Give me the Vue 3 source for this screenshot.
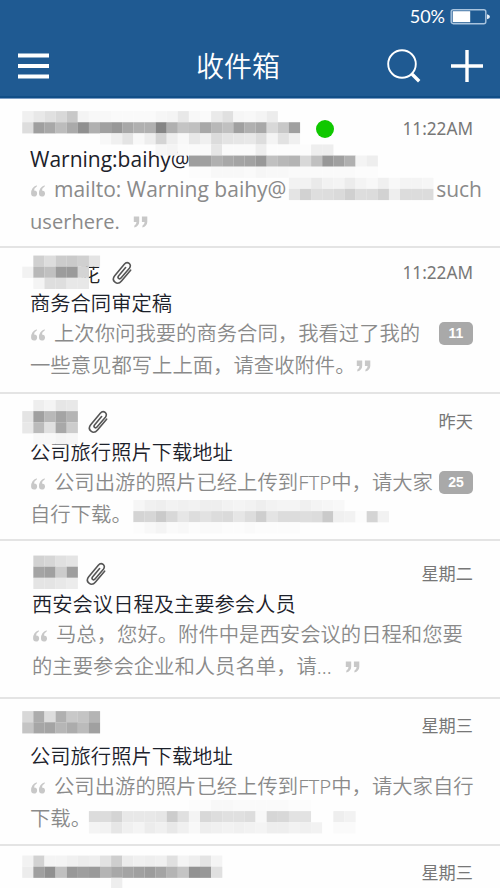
<script setup>
const mails = [
  {
    top: 99,
    online: true,
    senderGap: 316 - 30,
    time: '11:22AM',
    subject: 'Warning:baihy@',
    latin: true,
    lines: [
      { text: 'mailto: Warning baihy@', open: true, tail: 'such' },
      { text: 'userhere.', close: true, spaced: true },
    ],
    mosaic: [
      [10, 2, 'f0e8e0d8c8f4f8f8fafafafaf6f4e8f8faeae0f6f8f4ec'],
      [11, 2, 'dd9fa8bcaa90b0a098a8b0b085b0c4c0a8b8c0a0b0a8d8c8a0'],
      [12, 9, 'f8f0e4f8eed4eef8e8f0dce4e6e8ddf4e2f0'],
      [13, 14, 'f6f4fafafae6fafafaeefcfcfcfceeee'],
      [14, 17, '9ea0b0a8a4a298c0b8b4d8c098a0b0f4ee'],
      [15, 17, 'fcfcf8f8f8faf6f8f8fafafafafafafcfc'],
      [16, 26, 'f2f2eaf2f4ecf4f8f0f8f4f4f6'],
      [17, 26, 'e4d2dedddad0dddcd2eedcdcdc'],
    ],
  },
  {
    top: 248,
    name: '花',
    clip: true,
    senderGap: 50,
    time: '11:22AM',
    badge: '11',
    subject: '商务合同审定稿',
    lines: [
      { text: '上次你问我要的商务合同，我看过了我的', open: true },
      { text: '一些意见都写上上面，请查收附件。', close: true },
    ],
    mosaic: [
      [23, 3, 'd0ddcccad0e4'],
      [24, 2, 'f2b8c09c9ad4'],
      [25, 3, 'f4dedee8e8'],
    ],
  },
  {
    top: 394,
    clip: true,
    senderGap: 54,
    time: '昨天',
    badge: '25',
    subject: '公司旅行照片下载地址',
    lines: [
      { text: '公司出游的照片已经上传到FTP中，请大家', open: true },
      { text: '自行下载。' },
    ],
    mosaic: [
      [36, 3, 'eef4e6e8'],
      [37, 2, 'e4a0b8a4b4'],
      [38, 2, 'e8bbe0a8cc'],
      [39, 3, 'f8f8f4f6'],
      [45, 12, 'f6f0eef2f0f2eeeef2f4f2eef2f4f4f0f4f6f8'],
      [46, 12, 'd4d6cad8e6dde2dcdae6ddcee4dcdcdedccaf0f2fcd4f2'],
      [47, 12, 'fcf8f4faf8fcfafafcfcfafcfcfcfc'],
    ],
  },
  {
    top: 541,
    clip: true,
    senderGap: 50,
    time: '星期二',
    subject: '西安会议日程及主要参会人员',
    lines: [
      { text: '马总，您好。附件中是西安会议的日程和您要', open: true },
      { text: '的主要参会企业和人员名单，请...', close: true, spaced: true },
    ],
    mosaic: [
      [50, 3, 'd2d6e0e4'],
      [51, 3, 'a4a0cc9e'],
      [52, 3, 'e4e4e8ec'],
    ],
  },
  {
    top: 699,
    senderGap: 70,
    time: '星期三',
    subject: '公司旅行照片下载地址',
    lines: [
      { text: '公司出游的照片已经上传到FTP中，请大家自行', open: true },
      { text: '下载。' },
    ],
    mosaic: [
      [64, 2, 'd8acddb0c8c4b4'],
      [65, 2, 'c4a6a4b6acbba0'],
      [72, 17, 'fcfcf8f8fafafafafafcfc'],
      [73, 8, 'dcdcd4e8e8e8e6cce0f4d8dde0e0ddf8d6d8e2e2fefeeef2'],
      [74, 8, 'f4f2e6f0f4ecf0e8f0f8eef0f2f0f2f4eeeef2f0f2fefafa'],
    ],
  },
  {
    top: 846,
    senderGap: 170,
    time: '星期三',
    lines: [],
    mosaic: [
      [77, 2, 'f2d2f4f4f0eceee2ceecf0eef0e0f4eee4f4'],
      [78, 2, 'eca090c0989e9ab4a8a4a09ca4b4c49298e0'],
      [79, 10, 'ee'],
    ],
  },
]

const CELL = 100 / 9

function cells(mail) {
  return mail.mosaic.flatMap(([row, col, shades]) =>
    shades.match(/../g).map((s, i) => ({
      x: (col + i) * CELL,
      y: row * CELL - mail.top,
      fill: `#${s}${s}${s}`,
    }))
  )
}
</script>

<template>
  <div class="screen">
    <header class="header">
      <div class="status">
        <span>50%</span>
        <svg class="battery" width="41" height="18" viewBox="0 0 41 18">
          <rect x="1.2" y="1.7" width="34.6" height="14" rx="2" fill="none" stroke="#a9c4de" stroke-width="1.4" />
          <rect x="2.7" y="3.2" width="17.5" height="11" fill="#fff" />
          <path d="M37 6.2q3 .6 3 2.5t-3 2.5z" fill="#e4edf6" />
        </svg>
      </div>
      <div class="bar">
        <svg class="menu" width="31" height="27" viewBox="0 0 31 27">
          <path d="M0 2.5h31M0 13h31M0 23.5h31" stroke="#fff" stroke-width="4" />
        </svg>
        <h1>收件箱</h1>
        <div class="actions">
          <svg width="34" height="34" viewBox="0 0 34 34" fill="none" stroke="#fff">
            <circle cx="15" cy="15" r="13.8" stroke-width="1.9" />
            <path d="M24.5 25l1.5 1.5" stroke-width="2" />
            <path d="M25.2 25.2l7 7" stroke-width="3.4" />
          </svg>
          <svg width="32" height="32" viewBox="0 0 32 32">
            <path d="M0 16h32M16 0v32" stroke="#fff" stroke-width="3.4" />
          </svg>
        </div>
      </div>
    </header>

    <main>
      <article v-for="(mail, i) in mails" :key="i" class="mail">
        <div class="top">
          <span :style="{ width: mail.senderGap + 'px' }"></span>
          <i v-if="mail.online" class="online"></i>
          <span v-if="mail.name" class="name">{{ mail.name }}</span>
          <svg v-if="mail.clip" class="clip" width="20" height="24" viewBox="0 0 20 24">
            <path
              d="M13.600 6.500 6.500 15c-1.500 2 1 3.900 2.500 2.100L17.400 7.200c3-3.800-2-7.700-5.100-4L2.700 14.700c-4 5.200 2.600 10.400 6.800 5.300L18.600 9.200"
              fill="none" stroke="#555" stroke-width="1.6" stroke-linecap="round" stroke-linejoin="round"
            />
          </svg>
          <time>{{ mail.time }}</time>
        </div>
        <h2 v-if="mail.subject" :class="{ latin: mail.latin }">{{ mail.subject }}</h2>
        <div v-for="(line, n) in mail.lines" :key="n" class="line" :class="{ latin: mail.latin, last: n === 1 }">
          <svg v-if="line.open" class="quote open" width="14" height="12" viewBox="0 0 14 12">
            <path d="M5.800.3v1.300Q3 3 3 5.500h.4a3 3 0 1 1-3.300 3Q0 2.500 5.800.3zM13.700.3v1.300Q10.900 3 10.900 5.500h.4a3 3 0 1 1-3.300 3Q7.900 2.500 13.700.3z" />
          </svg>
          <span>{{ line.text }}</span>
          <span v-if="line.tail" class="tail">{{ line.tail }}</span>
          <svg v-if="line.close" class="quote close" :class="{ spaced: line.spaced }" width="15" height="12" viewBox="0 0 15 12">
            <path d="M.8.5h5.400v5.200Q6.200 10 1.300 11.500V9.800Q3.500 8.500 3.500 6H.8zM8.900.5h5.400v5.200Q14.300 10 9.400 11.500V9.800Q11.600 8.500 11.600 6H8.900z" />
          </svg>
          <b v-if="mail.badge && n === 0" class="badge">{{ mail.badge }}</b>
        </div>
        <svg class="mosaic" width="500" height="100%">
          <rect
            v-for="(c, k) in cells(mail)" :key="k"
            :x="c.x" :y="c.y" width="11.2" height="11.2" :fill="c.fill"
          />
        </svg>
      </article>
    </main>
  </div>
</template>

<style>
body {
  margin: 0;
  background: #fefefe;
}
</style>

<style scoped>
.screen {
  width: 500px;
  height: 888px;
  overflow: hidden;
  background: #fefefe;
  font-family: 'Noto Sans', 'Noto Sans CJK SC', sans-serif;
  font-weight: 350;
}
.header {
  box-sizing: border-box;
  height: 99px;
  background: #1f5a92;
  border-bottom: 1px solid #7b9dc4;
  box-shadow: inset 0 -2px #114e87;
  color: #fff;
}
.status {
  display: flex;
  justify-content: flex-end;
  align-items: center;
  gap: 5px;
  height: 33px;
  padding-right: 9px;
  font: 400 18px/33px Lato, sans-serif;
}
.bar {
  display: flex;
  align-items: center;
  height: 66px;
  padding: 0 17px 0 18px;
}
h1 {
  flex: 1;
  margin: 0;
  padding-left: 40px;
  text-align: center;
  font-size: 28px;
  line-height: 40px;
  font-weight: 350;
}
.actions {
  display: flex;
  align-items: center;
  gap: 30px;
}
.mail {
  position: relative;
  box-sizing: border-box;
  padding: 13px 27px 0 30px;
  height: 147px;
  border-bottom: 2px solid #e4e4e4;
}
.mail:nth-child(1) {
  height: 149px;
  padding-top: 15px;
}
.mail:nth-child(2) {
  height: 146px;
  padding-top: 10px;
}
.mail:nth-child(4) {
  height: 158px;
  padding-top: 18px;
  padding-left: 32px;
}
.mail:nth-child(5),
.mail:nth-child(6) {
  padding-top: 12px;
}
.top {
  display: flex;
  align-items: center;
  height: 30px;
}
.online {
  width: 18px;
  height: 18px;
  border-radius: 50%;
  background: #10c800;
}
.name {
  width: 32px;
  font-size: 20.3px;
  color: #222;
}
.clip {
  margin-left: 4px;
}
.name + .clip {
  margin-left: 0;
}
time {
  margin-left: auto;
  font-size: 17.2px;
  line-height: 30px;
  font-weight: 400;
  color: #777;
}
h2 {
  margin: 0;
  height: 30px;
  font-size: 20.3px;
  line-height: 30px;
  font-weight: 350;
  color: #1c212a;
  white-space: nowrap;
}
.line {
  display: flex;
  align-items: center;
  height: 31.5px;
  font-size: 20.35px;
  line-height: 31.5px;
  color: #8a8a8a;
  white-space: nowrap;
}
.latin {
  font-family: 'Open Sans', sans-serif;
  font-weight: 400;
  font-size: 21px;
}
.latin.last {
  font-size: 20.1px;
}
.quote {
  flex: none;
  fill: #c8c8c8;
}
.open {
  margin: 2px 9px 0 1px;
}
.close {
  margin: 2px 0 0 0;
}
.spaced {
  margin-left: 13px;
}
.tail {
  margin: 0 -9px 0 auto;
}
.badge {
  margin-left: auto;
  width: 34px;
  height: 23px;
  border-radius: 5px;
  background: #a9a9a9;
  color: #fff;
  font: 700 14px/23px 'Liberation Sans', sans-serif;
  text-align: center;
}
.mosaic {
  position: absolute;
  left: 0;
  top: 0;
  filter: blur(0.3px);
}
</style>
